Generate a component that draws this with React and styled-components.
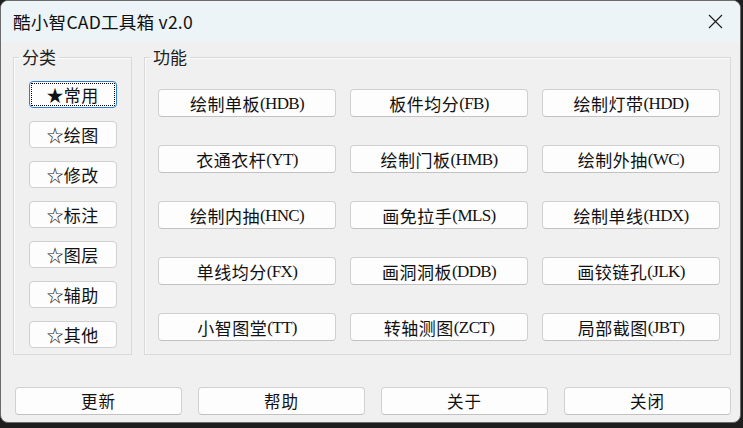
import React from 'react';
import styled, { createGlobalStyle } from 'styled-components';

const GlobalStyle = createGlobalStyle`
    html, body {
        margin: 0;
        padding: 0;
        background: #1e1e1e;
    }
    body {
        width: 743px;
        height: 428px;
        overflow: hidden;
    }
`;

const cjk = `"Noto Sans CJK SC", "Noto Sans", sans-serif`;

const Window = styled.div`
    box-sizing: border-box;
    width: 741px;
    height: 423px;
    background: #f0f0f0;
    border: 1px solid #6b6b6b;
    border-radius: 8px;
    overflow: hidden;
    display: flex;
    flex-direction: column;
    font-family: ${cjk};
    color: #111;
`;

const TitleBar = styled.div`
    height: 41px;
    flex: none;
    display: flex;
    align-items: center;
    padding: 0 17px 0 12px;
    background: #ecf4f7;
`;

const Title = styled.div`
    font-size: 17.6px;
    color: #111;
    letter-spacing: 0.2px;
`;

const CloseIcon = styled.svg`
    margin-left: auto;
    width: 15px;
    height: 15px;
`;

const Body = styled.div`
    flex: 1;
    display: flex;
    flex-direction: column;
    padding: 5px 9px 0 12px;
`;

const Groups = styled.div`
    display: flex;
    gap: 12px;
    align-items: stretch;
`;

const Group = styled.fieldset`
    margin: 0;
    padding: 0;
    min-width: 0;
    border: 1px solid #d9d9d9;
    box-shadow: inset 1px 1px 0 #fbfbfb;
    width: ${props => props.$width || 'auto'};
    flex: ${props => props.$width ? 'none' : '1'};
    box-sizing: border-box;
`;

const Legend = styled.legend`
    margin-left: 5px;
    padding: 0 3px;
    font-size: 17px;
    line-height: 20px;
    color: #222;
`;

const CategoryList = styled.div`
    display: flex;
    flex-direction: column;
    align-items: center;
    gap: 13px;
    padding: 14px 0 5px;
`;

const Button = styled.div`
    position: relative;
    box-sizing: border-box;
    display: flex;
    align-items: center;
    justify-content: center;
    background: #fdfdfd;
    border: 1px solid #d0d0d0;
    border-bottom-color: #c2c2c2;
    border-radius: 4px;
    font-family: ${cjk};
    font-size: 17px;
    line-height: 1;
    color: #111;
    white-space: nowrap;
    cursor: default;
`;

const CategoryButton = styled(Button)`
    width: 88px;
    height: 27px;
    letter-spacing: 0.3px;
    border-color: ${props => props.$focused ? '#2f7fd8' : '#d0d0d0'};

    &::after {
        content: '';
        display: ${props => props.$focused ? 'block' : 'none'};
        position: absolute;
        inset: 1px;
        border: 1px dotted #000;
        border-radius: 1px;
    }
`;

const FunctionGrid = styled.div`
    display: grid;
    grid-template-columns: repeat(3, 178px);
    column-gap: 14px;
    row-gap: 28px;
    padding: 22px 0 13px 13px;
`;

const FunctionButton = styled(Button)`
    height: 28px;
`;

const Name = styled.span`
    letter-spacing: 0.5px;
`;

const Code = styled.span`
    font-family: "Liberation Serif", serif;
    font-size: 17px;
    letter-spacing: -0.6px;
`;

const Footer = styled.div`
    display: grid;
    grid-template-columns: repeat(4, 1fr);
    gap: 16px;
    margin-top: 32px;
    padding-left: 2px;
`;

const FooterButton = styled(Button)`
    height: 28px;
    font-size: 16.5px;
    letter-spacing: 1px;
`;

const categories = ['常用', '绘图', '修改', '标注', '图层', '辅助', '其他'];

const functions = [
    ['绘制单板', 'HDB'], ['板件均分', 'FB'], ['绘制灯带', 'HDD'],
    ['衣通衣杆', 'YT'], ['绘制门板', 'HMB'], ['绘制外抽', 'WC'],
    ['绘制内抽', 'HNC'], ['画免拉手', 'MLS'], ['绘制单线', 'HDX'],
    ['单线均分', 'FX'], ['画洞洞板', 'DDB'], ['画铰链孔', 'JLK'],
    ['小智图堂', 'TT'], ['转轴测图', 'ZCT'], ['局部截图', 'JBT'],
];

const footerButtons = ['更新', '帮助', '关于', '关闭'];

const App = () => {
    const active = 0;
    return (
        <>
            <GlobalStyle />
            <Window>
                <TitleBar>
                    <Title>酷小智CAD工具箱 v2.0</Title>
                    <CloseIcon viewBox="0 0 15 15">
                        <path d="M1 1 L14 14 M14 1 L1 14" stroke="#1a1a1a" strokeWidth="1.1" fill="none" />
                    </CloseIcon>
                </TitleBar>
                <Body>
                    <Groups>
                        <Group $width="119px">
                            <Legend>分类</Legend>
                            <CategoryList>
                                {categories.map((cat, i) => (
                                    <CategoryButton key={cat} $focused={i === active}>
                                        {i === active ? '★' : '☆'}{cat}
                                    </CategoryButton>
                                ))}
                            </CategoryList>
                        </Group>
                        <Group>
                            <Legend>功能</Legend>
                            <FunctionGrid>
                                {functions.map(([name, code]) => (
                                    <FunctionButton key={code}>
                                        <Name>{name}</Name>
                                        <Code>({code})</Code>
                                    </FunctionButton>
                                ))}
                            </FunctionGrid>
                        </Group>
                    </Groups>
                    <Footer>
                        {footerButtons.map(label => (
                            <FooterButton key={label}>{label}</FooterButton>
                        ))}
                    </Footer>
                </Body>
            </Window>
        </>
    );
};

export default App;
